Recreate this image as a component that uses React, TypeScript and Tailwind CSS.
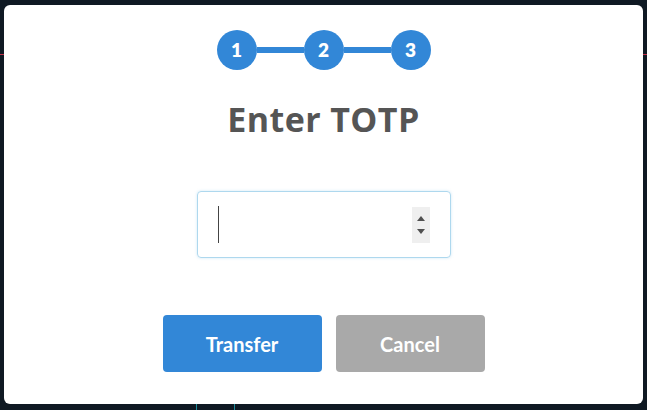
const Step = ({ n }: { n: number }) => (
	<div className="flex h-10 w-10 items-center justify-center rounded-full bg-[#3287d7] text-[19px] font-extrabold text-white">
		{n}
	</div>
);

const App = () => {
	return (
		<div className="relative h-[410px] w-[647px] overflow-hidden bg-[#0f1923] pt-[5px] pl-[4px] font-['Lato',sans-serif]">
			{/* bits of the page behind the modal */}
			<div className="absolute left-0 top-[54px] h-px w-[4px] bg-[#c2324a]" />
			<div className="absolute right-0 top-[54px] h-px w-[4px] bg-[#c2324a]" />
			<div className="absolute bottom-0 left-[196px] h-[6px] w-px bg-[#1d8a9a]" />
			<div className="absolute bottom-0 left-[234px] h-[6px] w-px bg-[#1d8a9a]" />

			<div className="flex h-[399px] w-[639px] flex-col items-center rounded-[6px] bg-white pt-[25px]">
				<div className="flex items-center">
					<Step n={1} />
					<div className="h-[6px] w-[47px] bg-[#3287d7]" />
					<Step n={2} />
					<div className="h-[6px] w-[47px] bg-[#3287d7]" />
					<Step n={3} />
				</div>

				<h1 className="mt-[29px] font-['Open_Sans',sans-serif] text-[34px] leading-[40px] font-bold tracking-[0.4px] text-[#555555]">
					Enter TOTP
				</h1>

				<div className="mt-[52px] flex h-[67px] w-[254px] items-center justify-between rounded-[4px] border border-[#aed8ee] pl-[20px] pr-[20px] shadow-[0_0_3px_rgba(120,190,230,0.35)]">
					<div className="h-[37px] w-px bg-[#444]" />
					<div className="flex h-[36px] w-[18px] flex-col items-center justify-center gap-[8px] bg-[#efefef]">
						<svg width="8" height="5" viewBox="0 0 8 5">
							<path d="M0 5 L4 0 L8 5 Z" fill="#505050" />
						</svg>
						<svg width="8" height="5" viewBox="0 0 8 5">
							<path d="M0 0 L8 0 L4 5 Z" fill="#505050" />
						</svg>
					</div>
				</div>

				<div className="mt-[57px] flex gap-[14px]">
					<button className="h-[57px] w-[159px] rounded-[4px] bg-[#3287d7] text-[20px] font-bold text-white">
						Transfer
					</button>
					<button className="h-[57px] w-[149px] rounded-[4px] bg-[#a9a9a9] text-[20px] font-bold text-white">
						Cancel
					</button>
				</div>
			</div>
		</div>
	);
};

export default App;
